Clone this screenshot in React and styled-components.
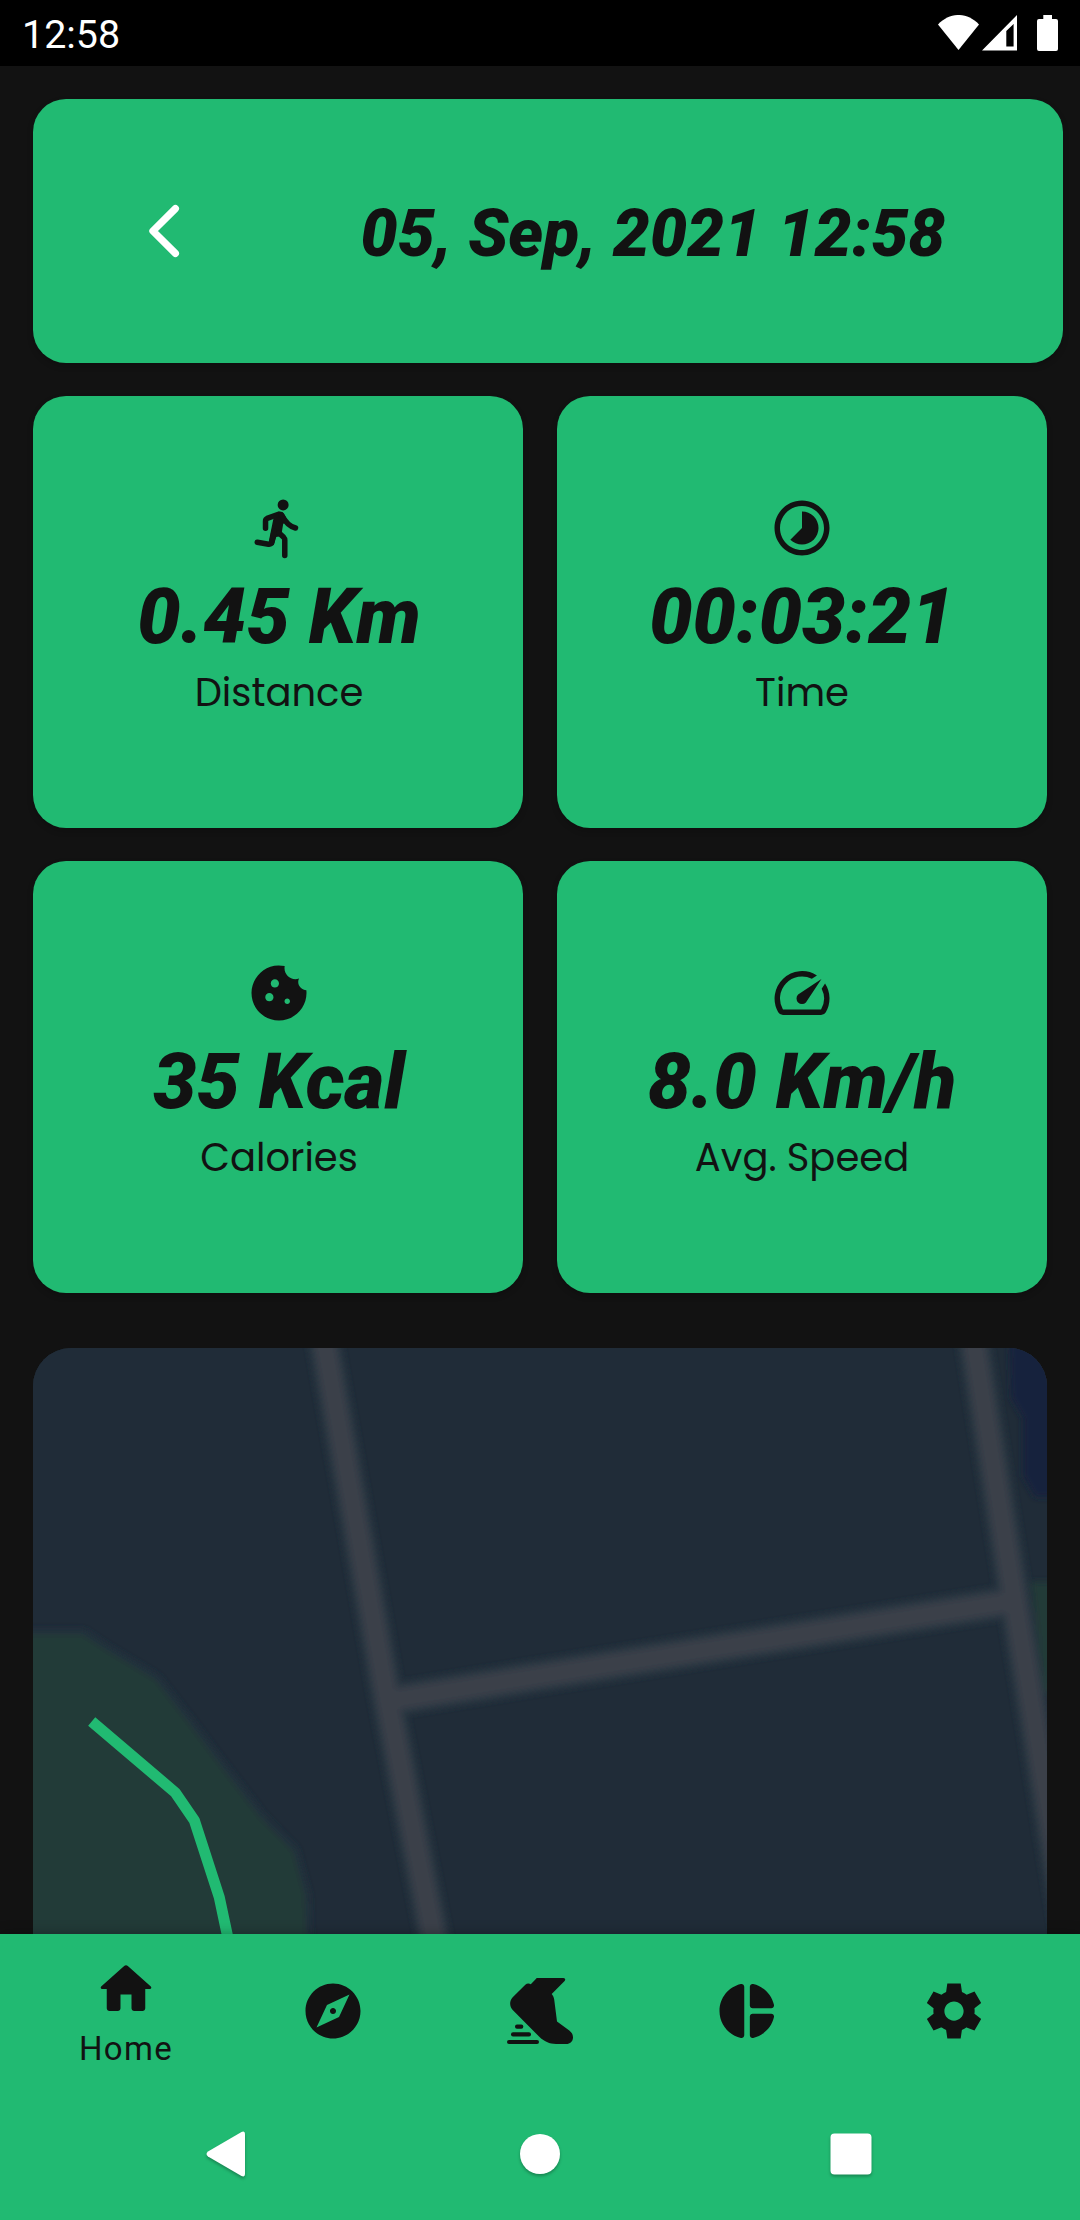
import React from "react";
import styled, { createGlobalStyle } from "styled-components";
import { MdTimelapse, MdCookie, MdSpeed, MdExplore } from "react-icons/md";

const GREEN = "#21ba72";
const INK = "#121212";

const GlobalStyle = createGlobalStyle`
  *, *::before, *::after { box-sizing: border-box; }
  body { margin: 0; background: ${INK}; }
  svg { display: block; flex: none; }
`;

const Screen = styled.div`
  display: flex;
  flex-direction: column;
  width: 1080px;
  height: 2220px;
  overflow: hidden;
  background: ${INK};
  color: ${INK};
  font-family: Roboto, "Liberation Sans", sans-serif;
`;

const StatusBar = styled.header`
  display: flex;
  flex: none;
  align-items: center;
  justify-content: space-between;
  height: 66px;
  padding: 0 22px 0 22px;
  background: #000;
  color: #fff;
`;

const Clock = styled.span`
  font-size: 39.4px;
  line-height: 66px;
  padding-top: 3px;
`;

const StatusIcons = styled.div`
  display: flex;
  align-items: center;
  gap: 3px;

  svg:last-child { margin-left: 17px; }
`;

const Content = styled.main`
  display: flex;
  flex: 1;
  flex-direction: column;
  min-height: 0;
  padding: 33px 33px 0;
  overflow: hidden;
`;

const Card = styled.section`
  border-radius: 33px;
  background: ${GREEN};
  box-shadow: 0 3px 6px rgba(0, 0, 0, 0.2);
`;

const TitleCard = styled(Card)`
  display: grid;
  flex: none;
  grid-template-columns: 264px 1fr;
  align-items: center;
  width: 1030px;
  height: 264px;
  padding-right: 54px;
`;

const BackButton = styled.button`
  display: flex;
  justify-content: center;
  padding: 0;
  border: 0;
  background: none;
`;

const Title = styled.h1`
  margin: 0;
  padding-top: 6px;
  font-size: 66px;
  font-style: italic;
  font-weight: 900;
  line-height: 88px;
  text-align: center;
  white-space: nowrap;
`;

const Stats = styled.div`
  display: grid;
  flex: none;
  grid-template-columns: 490px 490px;
  grid-auto-rows: 432px;
  gap: 33px 34px;
  margin-top: 33px;
`;

const StatCard = styled(Card)`
  display: flex;
  flex-direction: column;
  align-items: center;
  padding-top: 99px;

  &:nth-child(odd) { padding-left: 2px; }
`;

const Value = styled.strong`
  font-size: 77px;
  font-style: italic;
  font-weight: 900;
  line-height: 112px;
  white-space: nowrap;
`;

const Label = styled.span`
  font-family: Poppins, Inter, sans-serif;
  font-size: 38.5px;
  font-weight: 400;
  line-height: 39px;
  white-space: nowrap;
`;

const MapCard = styled.div`
  flex: none;
  width: 1014px;
  height: 700px;
  margin-top: 55px;
  border-radius: 38px;
  overflow: hidden;
  background: #202c38;
`;

const TabBar = styled.nav`
  display: grid;
  flex: none;
  grid-template-columns: repeat(5, 207px);
  justify-content: center;
  height: 154px;
  background: ${GREEN};
  box-shadow: 0 0 12px rgba(0, 0, 0, 0.3);
  z-index: 1;
`;

const Tab = styled.a`
  display: flex;
  flex-direction: column;
  align-items: center;
  justify-content: ${(p) => (p.$active ? "flex-start" : "center")};
  padding-top: ${(p) => (p.$active ? 22 : 0)}px;
`;

const TabLabel = styled.span`
  font-size: 33px;
  letter-spacing: 1.3px;
  line-height: 53px;
`;

const SystemNav = styled.footer`
  display: grid;
  flex: none;
  grid-template-columns: repeat(3, 311px);
  align-items: center;
  justify-content: center;
  justify-items: center;
  height: 132px;
  background: ${GREEN};
  z-index: 1;

  svg { filter: drop-shadow(0 2px 1.5px rgba(0, 0, 0, 0.28)); }
`;

const Glyph = ({ d, size = 66 }) => (
  <svg width={size} height={size} viewBox="0 0 24 24" fill="currentColor">
    <path d={d} />
  </svg>
);

const HOME =
  "M10 19v-5h4v5c0 .55.45 1 1 1h3c.55 0 1-.45 1-1v-7h1.7c.46 0 .68-.57.33-.87L12.67 3.6c-.38-.34-.96-.34-1.34 0l-8.36 7.53c-.34.3-.13.87.33.87H5v7c0 .55.45 1 1 1h3c.55 0 1-.45 1-1z";
const PIE =
  "M11 3.18v17.64c0 .64-.59 1.12-1.21.98C5.32 20.8 2 16.79 2 12s3.32-8.8 7.79-9.8c.62-.14 1.21.34 1.21.98zm2.03 0v6.81c0 .55.45 1 1 1h6.79c.64 0 1.12-.59.98-1.22-.85-3.76-3.8-6.72-7.55-7.57-.63-.14-1.22.34-1.22.98zm0 10.83v6.81c0 .64.59 1.12 1.22.98 3.76-.85 6.71-3.82 7.56-7.58.14-.62-.35-1.22-.98-1.22h-6.79c-.56.01-1.01.46-1.01 1.01z";
const GEAR =
  "M19.44 12.99l-.01.02c.04-.33.08-.67.08-1.01 0-.34-.03-.66-.07-.99l.01.02 2.44-1.92-2.43-4.22-2.87 1.16.01.01c-.52-.4-1.09-.74-1.71-1h.01L14.44 2H9.57l-.44 3.07h.01c-.62.26-1.19.6-1.71 1l.01-.01-2.88-1.17-2.44 4.22 2.44 1.92.01-.02c-.04.33-.07.65-.07.99 0 .34.03.68.08 1.01l-.01-.02-2.1 1.65-.33.26 2.43 4.2 2.88-1.15-.02-.04c.53.41 1.1.75 1.73 1.01h-.03L9.58 22h4.85s.03-.18.06-.42l.38-2.65h-.01c.62-.26 1.2-.6 1.73-1.01l-.02.04 2.88 1.15 2.43-4.2s-.14-.12-.33-.26l-2.11-1.66zM12 15.5c-1.93 0-3.5-1.57-3.5-3.5s1.57-3.5 3.5-3.5 3.5 1.57 3.5 3.5-1.57 3.5-3.5 3.5z";

const Runner = () => (
  <svg width="66" height="66" viewBox="0 0 24 24" fill="currentColor">
    <circle cx="13.5" cy="3.6" r="2" />
    <g transform="translate(-.3 0)">
      <path d="M10.2 8.9 12 6.1q1.4-.4 2.1.8l1.1 1.9-1.4 1.8-.5 3 .4 1.2-2.4.5-.9 3-1.9-.9z" />
      <g fill="none" stroke="currentColor" strokeWidth="2" strokeLinecap="round" strokeLinejoin="round">
        <path d="M7.4 12.1V9.5q0-.7.6-1L12.1 7" />
        <path d="M13.2 7.2Q15.3 11.3 18.3 12" />
        <path d="M4.4 17.2l4.1.7q1 .1 1.2-.8l.8-4" />
        <path d="M12.3 13.8l1.7 1.6q.4.4.4 1V22" />
      </g>
    </g>
  </svg>
);

const Shoe = () => (
  <svg width="66" height="66" viewBox="0 0 66 66" fill="currentColor">
    <path d="M30 0h26.400c1.800 0 2.400 1.800 1.200 3L44.700 16c1.300 1.500 2.200 3.400 2.500 5.500L50 43.400l12.300 9c2.400 1.800 3.700 4.200 3.700 7 0 3.800-3 6.600-6.800 6.600H49c-6.500 0-12-2.500-16.700-7.200L5.700 32C2.300 28.500 2.300 22.700 5.700 19.200L18.300 6.800c1.600-1.500 3.700-1.600 5.500-.6L28.600 1.200Q29.600 0 30 0z" />
    <rect x="8" y="46.600" width="8.300" height="4.200" rx="2" />
    <rect x="4" y="54.300" width="20" height="4.200" rx="2" />
    <rect x="0" y="61.900" width="32" height="4.100" rx="2" />
  </svg>
);

const StreetMap = () => (
  <svg width="1014" height="586" viewBox="0 0 1014 586">
    <defs>
      <filter id="soft" x="-10%" y="-10%" width="120%" height="120%">
        <feGaussianBlur stdDeviation="3" />
      </filter>
    </defs>
    <rect width="1014" height="586" fill="#202c38" />
    <g filter="url(#soft)">
      <path d="M976-20 978 50 990 70 990 128 1002 149H1040V-20z" fill="#18243d" />
      <path d="M998 234H1040V345H1012z" fill="#233b38" />
      <path
        d="M-20 284H50L74 300 124 330 158 374 187 413 229 468 262 502 274 547 276 610H-20z"
        fill="#233b38"
        stroke="#20323e"
        strokeWidth="5"
      />
      <g fill="none" stroke="#2a3743" strokeWidth="32">
        <path d="M287-30 354 350 406 616" />
        <path d="M360 352 507 328 975 254" />
        <path d="M937-30 980 243 1001 370 1038 600" />
      </g>
      <g fill="none" stroke="#3b404a" strokeWidth="21">
        <path d="M287-30 354 350 406 616" />
        <path d="M360 352 507 328 975 254" />
        <path d="M937-30 980 243 1001 370 1038 600" />
      </g>
    </g>
    <path
      d="M58.700 373.500 142.300 444.600 161.300 472.300 186.300 549.400 196 595"
      fill="none"
      stroke={GREEN}
      strokeWidth="11"
      strokeLinejoin="bevel"
    />
  </svg>
);

const stats = [
  { icon: <Runner />, value: "0.45 Km", label: "Distance" },
  { icon: <MdTimelapse size={66} />, value: "00:03:21", label: "Time" },
  { icon: <MdCookie size={66} />, value: "35 Kcal", label: "Calories" },
  { icon: <MdSpeed size={66} />, value: "8.0 Km/h", label: "Avg. Speed" },
];

export default function App() {
  return (
    <Screen>
      <GlobalStyle />
      <StatusBar>
        <Clock>12:58</Clock>
        <StatusIcons>
          <svg width="41" height="36" viewBox="0 0 41 36" fill="#fff">
            <path d="M0 9.500C12-3.200 29-3.200 41 9.500L20.500 35z" />
          </svg>
          <svg width="35" height="36" viewBox="0 0 35 36" fill="#fff">
            <path fillRule="evenodd" d="M35 0V35.500H0zM31.600 9 24.300 16V31.500H31.600z" />
          </svg>
          <svg width="21" height="36" viewBox="0 0 21 36" fill="#fff">
            <path d="M6.300 0H15V4H19Q21 4 21 6V34Q21 36 19 36H2Q0 36 0 34V6Q0 4 2 4H6.300z" />
          </svg>
        </StatusIcons>
      </StatusBar>

      <Content>
        <TitleCard>
          <BackButton aria-label="Back">
            <svg width="66" height="66" viewBox="0 0 66 66" fill="none" stroke="#fff" strokeWidth="7.200" strokeLinecap="round" strokeLinejoin="round">
              <path d="M43.400 10.600 20.900 33 43.400 55.400" />
            </svg>
          </BackButton>
          <Title>05, Sep, 2021 12:58</Title>
        </TitleCard>

        <Stats>
          {stats.map((s) => (
            <StatCard key={s.label}>
              {s.icon}
              <Value>{s.value}</Value>
              <Label>{s.label}</Label>
            </StatCard>
          ))}
        </Stats>

        <MapCard>
          <StreetMap />
        </MapCard>
      </Content>

      <TabBar>
        <Tab $active>
          <Glyph d={HOME} />
          <TabLabel>Home</TabLabel>
        </Tab>
        <Tab>
          <MdExplore size={66} />
        </Tab>
        <Tab>
          <Shoe />
        </Tab>
        <Tab>
          <Glyph d={PIE} />
        </Tab>
        <Tab>
          <Glyph d={GEAR} />
        </Tab>
      </TabBar>

      <SystemNav>
        <svg width="48" height="48" viewBox="0 0 48 48" fill="#fff">
          <path d="M3 21.500 36.500 2Q40 .5 40 4.500V43.500Q40 47.500 36.500 46L3 26.500Q0 24 3 21.500z" />
        </svg>
        <svg width="48" height="48" viewBox="0 0 48 48" fill="#fff">
          <circle cx="24" cy="24" r="20" />
        </svg>
        <svg width="48" height="48" viewBox="0 0 48 48" fill="#fff">
          <rect x="3.500" y="3.500" width="41" height="41" rx="4" />
        </svg>
      </SystemNav>
    </Screen>
  );
}
